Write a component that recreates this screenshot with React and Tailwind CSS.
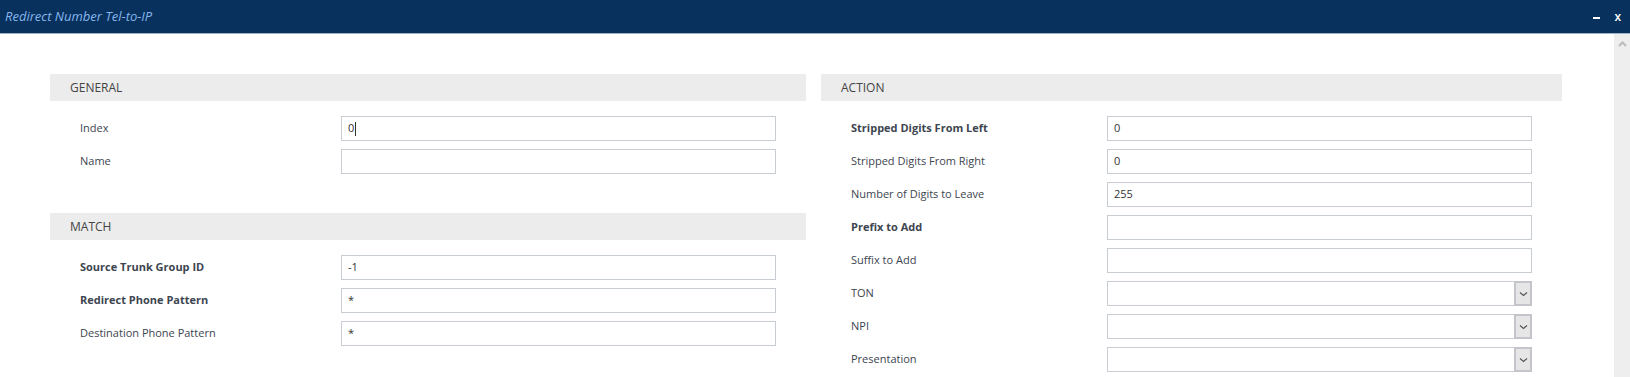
import React from 'react';

const font = { fontFamily: '"Open Sans", "Noto Sans", sans-serif' };

const Row = ({ label, value, bold, select, inputX, caret }) => (
  <div className="flex items-center h-[25px]">
    <div className={`pl-[30px] text-[11px] text-[#3d4550] ${bold ? 'font-bold' : ''}`} style={{ width: inputX }}>
      {label}
    </div>
    <div className="flex-1 mr-[30px] h-[25px] border border-[#c8ccd3] bg-white flex items-center">
      <span className="pl-[6px] text-[11px] text-[#333] flex-1 flex items-center">
        {value}
        {caret && <span className="inline-block w-px h-[14px] bg-[#333] ml-px" />}
      </span>
      {select && (
        <div className="w-[18px] h-[25px] -my-px -mr-px border-2 border-[#c3c5ca] bg-[#e6e6e6] flex items-center justify-center">
          <svg width="9" height="6" viewBox="0 0 9 6">
            <path d="M1 1.5 L4.5 4.5 L8 1.5" stroke="#555" strokeWidth="1.2" fill="none" />
          </svg>
        </div>
      )}
    </div>
  </div>
);

const Header = ({ title }) => (
  <div className="h-[27px] bg-[#ececec] flex items-center pl-[20px] text-[12px] text-[#444]">{title}</div>
);

export default function App() {
  return (
    <div className="w-[1630px] h-[377px] bg-white overflow-hidden flex flex-col" style={font}>
      <div className="h-[33px] bg-[#08315d] flex items-center justify-between border-b border-[#9fb2cc] box-content">
        <span className="pl-[5px] italic text-[13px] text-[#86b6ee]">Redirect Number Tel-to-IP</span>
        <div className="flex items-center gap-[14px] pr-[9px] text-white">
          <span className="block w-[7px] h-[2px] bg-white mt-[3px]" />
          <span className="text-[12px] font-semibold leading-none">x</span>
        </div>
      </div>
      <div className="flex flex-1">
        <div className="flex-1 flex gap-[15px] pl-[50px] pt-[40px]">
          <div className="w-[756px] flex flex-col">
            <Header title="GENERAL" />
            <div className="flex flex-col gap-[8px] mt-[15px]">
              <Row label="Index" value="0" inputX={291} caret />
              <Row label="Name" value="" inputX={291} />
            </div>
            <div className="mt-[39px]">
              <Header title="MATCH" />
            </div>
            <div className="flex flex-col gap-[8px] mt-[15px]">
              <Row label="Source Trunk Group ID" value="-1" bold inputX={291} />
              <Row label="Redirect Phone Pattern" value="*" bold inputX={291} />
              <Row label="Destination Phone Pattern" value="*" inputX={291} />
            </div>
          </div>
          <div className="w-[741px] flex flex-col">
            <Header title="ACTION" />
            <div className="flex flex-col gap-[8px] mt-[15px]">
              <Row label="Stripped Digits From Left" value="0" bold inputX={286} />
              <Row label="Stripped Digits From Right" value="0" inputX={286} />
              <Row label="Number of Digits to Leave" value="255" inputX={286} />
              <Row label="Prefix to Add" value="" bold inputX={286} />
              <Row label="Suffix to Add" value="" inputX={286} />
              <Row label="TON" value="" select inputX={286} />
              <Row label="NPI" value="" select inputX={286} />
              <Row label="Presentation" value="" select inputX={286} />
            </div>
          </div>
        </div>
        <div className="w-[16px] bg-[#eeeeee] flex justify-center pt-[7px]">
          <svg width="9" height="6" viewBox="0 0 9 6">
            <path d="M1 5 L4.5 1.5 L8 5" stroke="#bbb" strokeWidth="2" fill="none" />
          </svg>
        </div>
      </div>
    </div>
  );
}
